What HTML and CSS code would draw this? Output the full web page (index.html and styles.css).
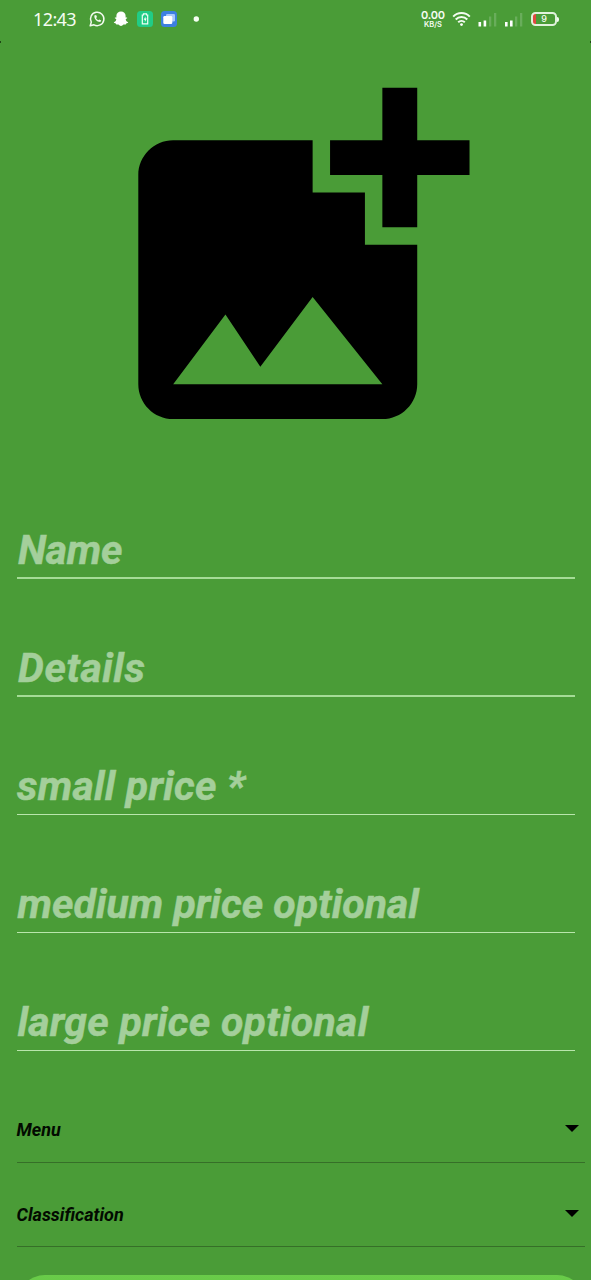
FILE: index.html
```
<!DOCTYPE html>
<html lang="en">
<head>
<meta charset="utf-8">
<title>Add item</title>
<link rel="stylesheet" href="styles.css">
</head>
<body>
<div class="screen">
  <header class="status">
    <span class="clock">12:43</span>
    <svg class="notifs" width="116" height="20" viewBox="0 0 116 20">
      <g fill="none" stroke="#f2faef" stroke-width="1.5">
        <path d="M2.2 16.8l1.1-3.7A6.7 6.7 0 1 1 6 15.8z" stroke-linejoin="round"/>
        <path d="M6.300 6.600c-.2 3.600 2.300 6.300 6 6.500l1-1.600-2-1.100-1 .9c-1-.4-1.800-1.200-2.200-2.200l.9-1-.9-2z" fill="#f2faef" stroke="none"/>
      </g>
      <path fill="#fff" d="M33 2.600c2.600 0 4.600 1.900 4.600 4.200v1.700c.6.200 1.300-.3 1.600.3.200.6-.8 1-1.500 1.400.4 1.700 1 2.600 2.500 3-.1.900-1.200 1-2 1.200-.2.500-.1.900-.6 1-.7.100-1.300-.2-2.100.2-.9.600-1.400 1.400-2.500 1.400s-1.600-.8-2.500-1.400c-.8-.4-1.400-.1-2.100-.2-.5-.1-.4-.5-.6-1-.8-.2-1.900-.3-2-1.200 1.500-.4 2.100-1.300 2.500-3-.7-.4-1.700-.8-1.500-1.400.3-.6 1-.1 1.600-.3V6.800c0-2.300 2-4.200 4.600-4.200z"/>
      <rect x="49" y="2" width="16" height="16" rx="3.500" fill="#21cc86"/>
      <path d="M55.500 6V4.800h3V6h1.200v8.800h-5.400V6z" fill="none" stroke="#effff6" stroke-width="1.200"/>
      <path d="M57.500 7.500l-1.800 3.200h1.200v2.200l1.800-3.300h-1.200z" fill="#fff"/>
      <rect x="73" y="2" width="16" height="16" rx="3.500" fill="#3d7fe0"/>
      <rect x="78" y="5" width="9" height="7.500" rx="1.300" fill="#a9c9fa"/>
      <rect x="75.300" y="7" width="9" height="8" rx="1.300" fill="#fff"/>
      <circle cx="108.300" cy="10" r="2.700" fill="#f5fff2"/>
    </svg>
    <div class="rate"><b>0.00</b><span>KB/S</span></div>
    <svg class="signals" width="76" height="20" viewBox="0 0 76 20">
      <g fill="none" stroke="#f4fcf1" stroke-width="2">
        <path d="M1.200 7.600a11.500 11.500 0 0 1 16.600 0"/>
        <path d="M3.700 10.500a8.200 8.200 0 0 1 11.600 0"/>
        <path d="M6.200 13.200a4.800 4.800 0 0 1 6.600 0"/>
      </g>
      <circle cx="9.500" cy="15.600" r="1.400" fill="#fff"/>
      <g fill="#fff">
        <rect x="26.500" y="13" width="2.600" height="4.500"/><rect x="31.600" y="11.500" width="2.600" height="6"/>
        <rect x="53" y="13" width="2.600" height="4.500"/><rect x="58" y="11.500" width="2.600" height="6"/>
      </g>
      <g fill="#69ad5b">
        <rect x="37" y="7.500" width="2.300" height="10"/><rect x="42" y="4" width="2.300" height="13.500"/>
        <rect x="63" y="7.500" width="2.300" height="10"/><rect x="68" y="4" width="2.300" height="13.500"/>
      </g>
    </svg>
    <div class="battery"><span>9</span></div>
    <i class="corner left"></i><i class="corner right"></i>
  </header>

  <main class="content">
    <div class="photo">
      <svg width="418.400" height="418.400" viewBox="0 0 24 24">
        <path d="M19 7v3h-2V7h-3V5h3V2h2v3h3v2zm-3 4V8h-3V5H5c-1.100 0-2 .9-2 2v12c0 1.100.9 2 2 2h12c1.100 0 2-.9 2-2v-8zM5 19l3-4 2 3 3-4 4 5z"/>
      </svg>
    </div>
    <form class="fields">
      <div class="field thick"><span class="name">Name</span></div>
      <div class="field thick"><span class="details">Details</span></div>
      <div class="field"><span class="small">small price *</span></div>
      <div class="field"><span class="medium">medium price optional</span></div>
      <div class="field"><span class="large">large price optional</span></div>
    </form>
    <div class="picker"><span>Menu</span><i class="arrow"></i></div>
    <div class="picker"><span>Classification</span><i class="arrow"></i></div>
    <div class="submit"></div>
  </main>
</div>
</body>
</html>
```
FILE: styles.css
```
* { box-sizing: border-box; }
body { margin: 0; background: #4a9c37; font-family: Roboto, sans-serif; }
.screen { width: 591px; height: 1280px; overflow: hidden; }

.status { position: relative; height: 40px; display: flex; align-items: center; padding: 0 31px 2px 33px; color: #f5fcf2; }
.clock { width: 51px; font: 400 18px/20px "Noto Sans", sans-serif; letter-spacing: -0.600px; white-space: nowrap; }
.notifs { margin-left: 4px; flex: none; }
.rate { margin-left: 216px; width: 26px; flex: none; display: flex; flex-direction: column; align-items: center; }
.rate b { font: 600 11px/10px Inter, sans-serif; letter-spacing: -0.200px; }
.rate span { font: 600 7.500px/8px Inter, sans-serif; margin-top: 1px; }
.signals { margin-left: 6px; flex: none; }
.battery { position: relative; width: 26px; height: 14px; margin-left: 3px; flex: none; border: 1.700px solid #f4fcf1; border-radius: 4.500px; display: flex; align-items: center; justify-content: center; background: linear-gradient(90deg, #df4940 0 3px, transparent 3px); }
.battery { border-width: 2px; border-color: #e1f2dc; }
.battery span { font: 500 9px/10px Inter, sans-serif; }
.battery::after { content: ""; position: absolute; right: -3.500px; top: 2.500px; width: 2px; height: 5px; background: #f4fcf1; border-radius: 0 2px 2px 0; }
.corner { position: absolute; top: 41px; width: 1px; height: 2px; background: #1d4814; }
.corner.left { left: 0; }
.corner.right { right: 0; }

.content { padding: 12.500px 0 0 16.500px; }
.photo { height: 418.500px; padding-left: 69.500px; }
.photo svg { display: block; }

.fields { padding: 0 16.500px 0 0; margin-top: -11px; }
.field { height: 118.200px; display: flex; align-items: flex-end; border-bottom: 1px solid #b9e6ac; padding-bottom: 4px; }
.field.thick { border-bottom: 2px solid #a5dc96; padding-bottom: 3px; }
.fields .field:first-child { height: 118.600px; }
.field:nth-child(3) { height: 117.800px; }
.field span { font-size: 41px; line-height: 48px; font-weight: 700; font-style: italic; color: #a4cf9b; -webkit-text-stroke: 0.500px #a4cf9b; white-space: nowrap; }
.name { margin-left: 1.500px; letter-spacing: -0.300px; }
.details { margin-left: 1.500px; letter-spacing: 0.550px; }
.small { margin-left: 0.500px; letter-spacing: 0.250px; }
.medium { margin-left: 1px; letter-spacing: 0.030px; }
.large { margin-left: 1px; letter-spacing: 0.280px; }

.picker { height: 84.300px; display: flex; align-items: center; justify-content: space-between; border-bottom: 1px solid #366f28; margin-right: 6px; padding: 21px 6px 0 0; }
.fields + .picker { height: 112px; padding-top: 48px; }
.picker span { font-size: 18px; line-height: 22px; font-weight: 700; font-style: italic; color: #020a00; white-space: nowrap; }
.arrow { margin-bottom: 4px; border: 7px solid transparent; border-top-color: #000; border-bottom: 0; }
.submit { margin: 28px 6px 0 0; height: 60px; border-radius: 28px; background: linear-gradient(#69cc49, #5fbf40); }
```
